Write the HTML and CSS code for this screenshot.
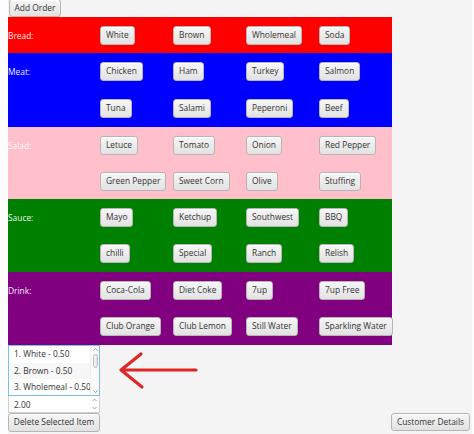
FILE: index.html
```html
<!DOCTYPE html>
<html>
<head>
<meta charset="utf-8">
<link rel="stylesheet" href="styles.css">
</head>
<body>
<div class="window">
  <div class="toolbar"><button class="btn add">Add Order</button></div>
  <div class="menu">
    <div class="sect bread r1">
      <span class="lbl">Bread:</span>
      <button class="btn">White</button><button class="btn">Brown</button><button class="btn">Wholemeal</button><button class="btn">Soda</button>
    </div>
    <div class="sect meat r2">
      <span class="lbl">Meat:</span>
      <button class="btn">Chicken</button><button class="btn">Ham</button><button class="btn">Turkey</button><button class="btn">Salmon</button>
      <button class="btn">Tuna</button><button class="btn">Salami</button><button class="btn">Peperoni</button><button class="btn">Beef</button>
    </div>
    <div class="sect salad r2b">
      <span class="lbl">Salad:</span>
      <button class="btn">Letuce</button><button class="btn">Tomato</button><button class="btn">Onion</button><button class="btn">Red Pepper</button>
      <button class="btn">Green Pepper</button><button class="btn">Sweet Corn</button><button class="btn">Olive</button><button class="btn">Stuffing</button>
    </div>
    <div class="sect sauce r2c">
      <span class="lbl">Sauce:</span>
      <button class="btn">Mayo</button><button class="btn">Ketchup</button><button class="btn">Southwest</button><button class="btn">BBQ</button>
      <button class="btn">chilli</button><button class="btn">Special</button><button class="btn">Ranch</button><button class="btn">Relish</button>
    </div>
    <div class="sect drink r2c">
      <span class="lbl">Drink:</span>
      <button class="btn">Coca-Cola</button><button class="btn">Diet Coke</button><button class="btn">7up</button><button class="btn">7up Free</button>
      <button class="btn">Club Orange</button><button class="btn">Club Lemon</button><button class="btn">Still Water</button><button class="btn">Sparkling Water</button>
    </div>
  </div>
  <div class="bottom">
    <div class="left">
      <div class="list">
        <div class="items">
          <div class="item">1. White - 0.50</div>
          <div class="item alt">2. Brown - 0.50</div>
          <div class="item">3. Wholemeal - 0.50</div>
        </div>
        <div class="vscroll">
          <svg class="sarrow" width="9" height="7" viewBox="0 0 9 7"><path d="M2.5 4.5 L4.5 2.5 L6.5 4.5" fill="none" stroke="#9a9a9a" stroke-width="1"/></svg>
          <div class="track"><div class="thumb"></div></div>
          <svg class="sarrow" width="9" height="7" viewBox="0 0 9 7"><path d="M2.5 2.5 L4.5 4.5 L6.5 2.5" fill="none" stroke="#9a9a9a" stroke-width="1"/></svg>
        </div>
      </div>
      <div class="spinner">
        <span class="val">2.00</span>
        <div class="arrows">
          <svg width="9" height="8" viewBox="0 0 9 8"><path d="M2.5 5 L4.5 3 L6.5 5" fill="none" stroke="#a0a0a0" stroke-width="1"/></svg>
          <svg width="9" height="8" viewBox="0 0 9 8"><path d="M2.5 3 L4.5 5 L6.5 3" fill="none" stroke="#a0a0a0" stroke-width="1"/></svg>
        </div>
      </div>
      <button class="btn del">Delete Selected Item</button>
    </div>
    <svg class="arrow" width="90" height="46" viewBox="0 0 90 46">
      <path d="M11 22 L86 22 M31 6 L11 22 L32 39" fill="none" stroke="#e02525" stroke-width="3.2" stroke-linecap="round" stroke-linejoin="round"/>
    </svg>
    <button class="btn cust">Customer Details</button>
  </div>
</div>
</body>
</html>
```
FILE: styles.css
```css
* { box-sizing: border-box; }
html, body { margin: 0; padding: 0; background: #fdfdfd; }
body { font-family: "Open Sans", "Noto Sans", sans-serif; font-size: 8.4px; color: #333; }

.window {
  margin-left: 8px;
  width: 464px;
  height: 434px;
  background: #f4f4f4;
  display: flex;
  flex-direction: column;
}

.btn {
  font-family: inherit;
  font-size: 8.4px;
  color: #333;
  height: 19px;
  padding: 0 5px;
  border: 1px solid #b5b5b5;
  border-radius: 3px;
  background: linear-gradient(#f6f6f6, #e2e2e2);
  box-shadow: inset 0 1px 0 #ffffff;
  display: inline-flex;
  align-items: center;
  justify-content: center;
  white-space: nowrap;
  margin: 0;
  line-height: 1;
}

.toolbar { height: 17px; display: flex; align-items: flex-end; }
.add { height: 18px; margin-left: 1px; width: 52px; }

.menu { width: 384px; display: flex; flex-direction: column; }
.sect {
  display: grid;
  grid-template-columns: 92px 73px 73px 73px 73px;
  align-items: center;
  justify-items: start;
}
.sect .btn:nth-of-type(4n+1) { grid-column: 2; }
.lbl { grid-column: 1; grid-row: 1; color: #fff; padding-left: 0; opacity: 0.92; }
.r1 { grid-template-rows: 36px; }
.r2 { grid-template-rows: 37px 37px; }
.r2b { grid-template-rows: 36px 36px; }
.r2c { grid-template-rows: 36px 37px; }
.bread { background: #ff0000; }
.meat { background: #0000ff; }
.salad { background: #ffc0cb; }
.sauce { background: #008000; }
.drink { background: #800080; }

.bottom { display: flex; align-items: flex-start; flex: 1; }
.left { width: 92px; display: flex; flex-direction: column; }

.list {
  height: 51px;
  border: 1px solid #7cc1df;
  background: #fff;
  display: flex;
  overflow: hidden;
}
.items { flex: 1; overflow: hidden; }
.item {
  height: 16.5px;
  line-height: 16.5px;
  padding-left: 5px;
  white-space: nowrap;
  overflow: hidden;
}
.item.alt { background: #f7f7f7; }
.vscroll {
  width: 9px;
  display: flex;
  flex-direction: column;
  align-items: center;
  background: #fafafa;
  border-left: 1px solid #eeeeee;
}
.sarrow { flex: none; }
.track { flex: 1; width: 100%; padding: 0 1.5px; }
.thumb {
  height: 14px;
  margin-top: 1px;
  border: 1px solid #bdbdbd;
  border-radius: 3px;
  background: linear-gradient(90deg, #f4f4f4, #e4e4e4);
}

.spinner {
  height: 17px;
  border: 1px solid #d0d0d0;
  border-top: none;
  background: #fff;
  display: flex;
  align-items: center;
}
.val { flex: 1; padding-left: 5px; }
.arrows {
  width: 10px;
  height: 100%;
  display: flex;
  flex-direction: column;
  justify-content: center;
  align-items: center;
}

.del { width: 92px; height: 19px; }

.arrow { margin-left: 10px; margin-top: 3px; flex: none; }

.cust {
  margin-left: auto;
  margin-right: 2px;
  align-self: flex-end;
  margin-bottom: 3px;
  height: 18px;
  width: 79px;
}
```
